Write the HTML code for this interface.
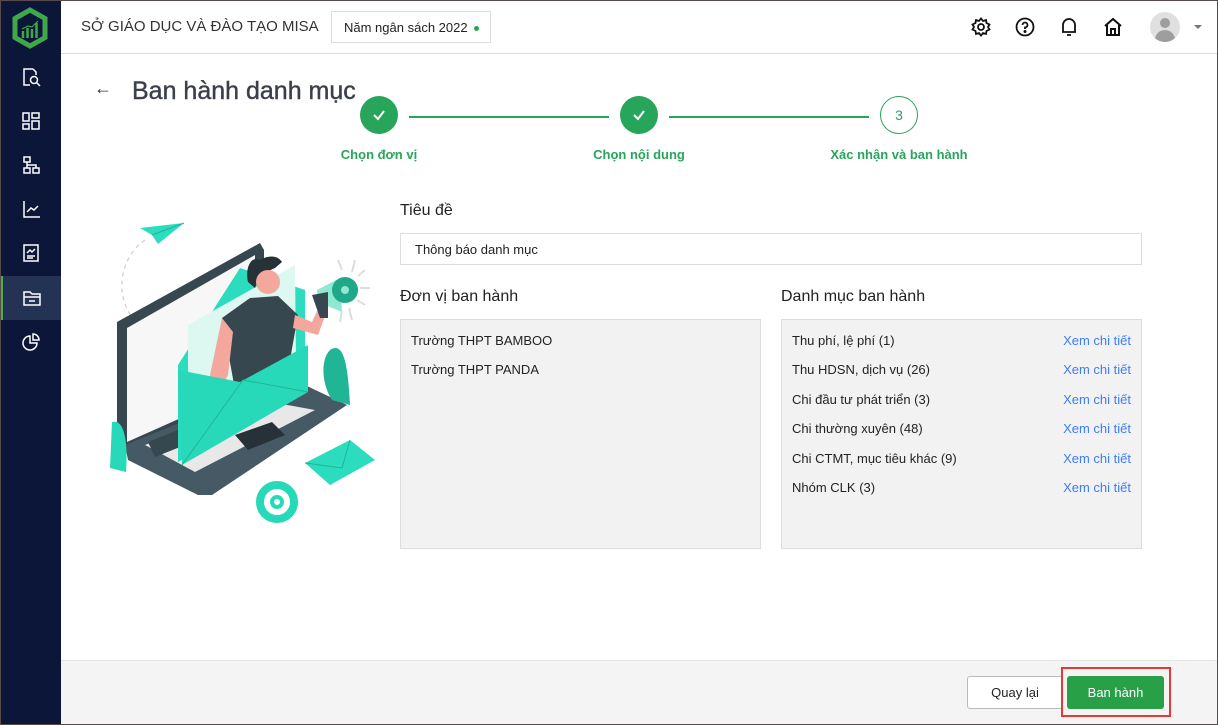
<!DOCTYPE html>
<html><head><meta charset="utf-8"><style>
*{box-sizing:border-box;margin:0;padding:0}
body{width:1218px;height:725px;overflow:hidden;font-family:"Liberation Sans",sans-serif;background:#fff;position:relative;color:#212121;font-size:13px}
.frame{position:absolute;inset:0;border:1px solid #5a4a4a;pointer-events:none;z-index:10}
.side{position:absolute;left:0;top:0;width:61px;height:725px;background:#0c1638}
.side .it{position:absolute;left:0;width:61px;height:44px;display:flex;align-items:center;justify-content:center}
.side .act{background:#243254;border-left:3px solid #4caf50}
.top{position:absolute;left:61px;top:0;right:0;height:54px;border-bottom:1px solid #ddd}
.t{position:absolute;white-space:nowrap}
.step{position:absolute;width:38px;height:38px;border-radius:50%;background:#27a55a;display:flex;align-items:center;justify-content:center}
.line{position:absolute;height:2px;background:#27a55a;top:116px}
.lbl{position:absolute;top:147px;font-size:13px;color:#27a55a;font-weight:bold;transform:translateX(-50%);white-space:nowrap}
.box{position:absolute;background:#f2f2f2;border:1px solid #ddd}
.row{position:absolute;left:10px;font-size:13px;color:#222}
.lnk{position:absolute;right:10px;color:#3d7ef7;font-size:13px}
.foot{position:absolute;left:61px;right:0;top:660px;bottom:0;background:#f4f4f4;border-top:1px solid #e4e4e4}
</style></head><body>
<div class="side">
  <svg style="position:absolute;left:11px;top:7px" width="38" height="42" viewBox="0 0 38 42"><path d="M19 3L34 11.5V30.5L19 39L4 30.5V11.5Z" fill="none" stroke="#3fa84a" stroke-width="5"/><path d="M12 31V24M16.5 31V21M21 31V22M25.5 31V16" stroke="#3fa84a" stroke-width="2.5"/><path d="M11 22L17 19L21 20L27 14" stroke="#3fa84a" stroke-width="1.2" fill="none"/></svg>
  <div class="it" style="top:55px"><svg width="20" height="20" fill="none" stroke="#fff" stroke-width="1.5"><path d="M12 2H3V18H9M12 2L15 5V8"/><circle cx="13" cy="13" r="3.5"/><path d="M15.5 15.5L19 19"/></svg></div>
  <div class="it" style="top:99px"><svg width="20" height="20" fill="none" stroke="#fff" stroke-width="1.5"><rect x="2" y="2" width="6" height="8"/><rect x="11" y="2" width="7" height="5"/><rect x="2" y="13" width="6" height="5"/><rect x="11" y="10" width="7" height="8"/></svg></div>
  <div class="it" style="top:143px"><svg width="20" height="20" fill="none" stroke="#fff" stroke-width="1.5"><rect x="3" y="2" width="6" height="5"/><rect x="3" y="13" width="6" height="5"/><rect x="12" y="13" width="6" height="5"/><path d="M6 7V13M6 10H15V13"/></svg></div>
  <div class="it" style="top:187px"><svg width="20" height="20" fill="none" stroke="#fff" stroke-width="1.5"><path d="M3 2V18H19M6 13L10 9L13 11L17 7"/></svg></div>
  <div class="it" style="top:231px"><svg width="20" height="20" fill="none" stroke="#fff" stroke-width="1.5"><rect x="3" y="2" width="14" height="16"/><path d="M6 10L9 7L11 9L14 6M6 13H14M6 15H12"/></svg></div>
  <div class="it act" style="top:276px"><svg width="20" height="20" fill="none" stroke="#fff" stroke-width="1.5"><path d="M2 4H8L10 6H18V17H2ZM2 9H18M7 13H13"/></svg></div>
  <div class="it" style="top:320px"><svg width="20" height="20" fill="none" stroke="#fff" stroke-width="1.5"><path d="M9 4A7 7 0 1 0 16 11H9Z"/><path d="M12 2A6 6 0 0 1 18 8H12Z"/></svg></div>
</div>
<div class="top">
  <div class="t" style="left:20px;top:18px;font-size:15px;color:#333">SỞ GIÁO DỤC VÀ ĐÀO TẠO MISA</div>
  <div style="position:absolute;left:270px;top:11px;width:160px;height:32px;border:1px solid #ddd;font-size:13px;padding:8px 0 0 12px;color:#222;white-space:nowrap">Năm ngân sách 2022 <span style="display:inline-block;width:5px;height:5px;border-radius:50%;background:#27a55a;vertical-align:middle;margin-left:3px"></span></div>
  <svg style="position:absolute;left:910px;top:17px" width="20" height="20" fill="none" stroke="#111" stroke-width="1.8"><circle cx="10" cy="10" r="3"/><path d="M10 1.5L12 4L15 3L15.5 6L18.5 7.5L17 10L18.5 12.5L15.5 14L15 17L12 16L10 18.5L8 16L5 17L4.5 14L1.5 12.5L3 10L1.5 7.5L4.5 6L5 3L8 4Z"/></svg>
  <svg style="position:absolute;left:954px;top:17px" width="20" height="20" fill="none" stroke="#111" stroke-width="1.8"><circle cx="10" cy="10" r="8.5"/><path d="M7.5 8A2.5 2.5 0 1 1 10 10.5V12"/><circle cx="10" cy="14.5" r=".6" fill="#111"/></svg>
  <svg style="position:absolute;left:998px;top:17px" width="20" height="20" fill="none" stroke="#111" stroke-width="1.8"><path d="M4 15V8A6 6 0 0 1 16 8V15H3H17M8 18H12"/></svg>
  <svg style="position:absolute;left:1042px;top:17px" width="20" height="20" fill="none" stroke="#111" stroke-width="2"><path d="M2 9L10 2L18 9M4 8V18H16V8M8 18V12H12V18"/></svg>
  <div style="position:absolute;left:1089px;top:12px;width:30px;height:30px;border-radius:50%;background:#e0e0e0;overflow:hidden"><div style="position:absolute;left:10px;top:6px;width:10px;height:10px;border-radius:50%;background:#9e9e9e"></div><div style="position:absolute;left:5px;top:18px;width:20px;height:14px;border-radius:10px 10px 0 0;background:#9e9e9e"></div></div>
  <div style="position:absolute;left:1133px;top:25px;border:4px solid transparent;border-top:4px solid #777"></div>
</div>
<div class="t" style="left:94px;top:78px;font-size:18px;color:#333">←</div>
<div class="t" style="left:132px;top:77px;font-size:25px;color:#3a3f4a;-webkit-text-stroke:0.4px #3a3f4a">Ban hành danh mục</div>
<div class="step" style="left:360px;top:96px"><svg width="14" height="14" fill="none" stroke="#fff" stroke-width="2"><path d="M2 7L6 11L12 3"/></svg></div>
<div class="line" style="left:409px;width:200px"></div>
<div class="step" style="left:620px;top:96px"><svg width="14" height="14" fill="none" stroke="#fff" stroke-width="2"><path d="M2 7L6 11L12 3"/></svg></div>
<div class="line" style="left:669px;width:200px"></div>
<div class="step" style="left:880px;top:96px;background:#fff;border:1.5px solid #27a55a;color:#27a55a;font-size:14px">3</div>
<div class="lbl" style="left:379px">Chọn đơn vị</div>
<div class="lbl" style="left:639px">Chọn nội dung</div>
<div class="lbl" style="left:899px">Xác nhận và ban hành</div>

<svg style="position:absolute;left:100px;top:210px" width="290" height="320" viewBox="0 0 290 320">
<path d="M45 30C15 50 10 105 55 125" fill="none" stroke="#ccc" stroke-width="1.2" stroke-dasharray="4 4"/>
<path d="M40 18L84 13L58 34L52 25Z" fill="#2bdcbf"/><path d="M52 25L84 13" stroke="#1fb596"/>
<path d="M17 112L160 33L164 40L164 178L27 240L17 236Z" fill="#37474f"/>
<path d="M27 118L155 45L155 175L27 232Z" fill="#f7f7f7"/>
<path d="M25 235L190 168L247 195L112 285L98 285L28 250Z" fill="#455a64"/>
<path d="M45 235L160 190L215 200L95 262Z" fill="#e8e8e8"/>
<path d="M48 232L78 220L85 235L55 247Z" fill="#37474f"/>
<path d="M135 225L172 212L185 225L148 240Z" fill="#263238"/>
<path d="M78 155L140 58L205 80L205 180L78 252Z" fill="#2bdcbf"/>
<path d="M88 115L195 55L196 150L88 205Z" fill="#dcf8f0"/>
<path d="M160 50C150 45 145 60 148 72L155 78L160 65L175 58L182 52C178 45 168 45 160 50Z" fill="#263238"/>
<circle cx="168" cy="72" r="12" fill="#f4a79d"/>
<path d="M122 108L150 88L178 86L198 105L190 150L180 175L135 180Z" fill="#37474f"/>
<path d="M122 108L110 165L120 180L128 165L133 122Z" fill="#f4a79d"/>
<path d="M195 105L212 112L220 95L228 98L218 125L193 118Z" fill="#f4a79d"/>
<path d="M217 80L240 68L242 102L218 92Z" fill="#8fe8d2"/>
<path d="M212 85L228 82L228 108L220 108Z" fill="#37474f"/>
<circle cx="245" cy="80" r="13" fill="#1fa88a"/><circle cx="245" cy="80" r="4" fill="#8fe8d2"/>
<g stroke="#ddd" stroke-width="2"><path d="M238 50L242 60M255 50L252 62M265 60L258 66M270 78L260 78M265 95L257 90M252 110L249 98M240 112L242 100"/></g>
<path d="M78 160L140 172L208 135L208 182L82 255Z" fill="#27d9b8"/>
<path d="M82 255L143 170M143 170L208 182" stroke="#1fb596" stroke-width="1"/>
<path d="M230 140C245 130 248 160 250 195L232 190C222 175 220 150 230 140Z" fill="#20b594"/>
<path d="M12 212C25 208 28 235 26 262L10 258Z" fill="#27d9b8"/>
<path d="M205 253L250 230L275 250L230 275Z" fill="#2bdcbf"/><path d="M205 253L242 258L250 230" stroke="#1fb596" fill="none"/>
<circle cx="177" cy="292" r="17" fill="none" stroke="#27d9b8" stroke-width="8"/>
<circle cx="177" cy="292" r="5" fill="none" stroke="#27d9b8" stroke-width="4"/>
</svg>

<div class="t" style="left:400px;top:202px;font-size:16px;color:#222">Tiêu đề</div>
<div style="position:absolute;left:400px;top:233px;width:742px;height:32px;border:1px solid #ddd;padding:8px 14px;font-size:13px">Thông báo danh mục</div>
<div class="t" style="left:400px;top:288px;font-size:16px;color:#222">Đơn vị ban hành</div>
<div class="t" style="left:781px;top:288px;font-size:16px;color:#222">Danh mục ban hành</div>
<div class="box" style="left:400px;top:319px;width:361px;height:230px">
  <div class="row" style="top:13px">Trường THPT BAMBOO</div>
  <div class="row" style="top:42px">Trường THPT PANDA</div>
</div>
<div class="box" style="left:781px;top:319px;width:361px;height:230px">
  <div class="row" style="top:13px">Thu phí, lệ phí (1)</div><div class="lnk" style="top:13px">Xem chi tiết</div>
  <div class="row" style="top:42px">Thu HDSN, dịch vụ (26)</div><div class="lnk" style="top:42px">Xem chi tiết</div>
  <div class="row" style="top:72px">Chi đầu tư phát triển (3)</div><div class="lnk" style="top:72px">Xem chi tiết</div>
  <div class="row" style="top:101px">Chi thường xuyên (48)</div><div class="lnk" style="top:101px">Xem chi tiết</div>
  <div class="row" style="top:131px">Chi CTMT, mục tiêu khác (9)</div><div class="lnk" style="top:131px">Xem chi tiết</div>
  <div class="row" style="top:160px">Nhóm CLK (3)</div><div class="lnk" style="top:160px">Xem chi tiết</div>
</div>
<div class="foot"></div>
<div style="position:absolute;left:967px;top:676px;width:96px;height:33px;border:1px solid #bbb;border-radius:3px;background:#fff;text-align:center;line-height:31px;font-size:13px">Quay lại</div>
<div style="position:absolute;left:1061px;top:667px;width:110px;height:50px;border:2px solid #e53935"></div>
<div style="position:absolute;left:1067px;top:676px;width:97px;height:33px;border-radius:3px;background:#27a048;color:#fff;text-align:center;line-height:33px;font-size:13px">Ban hành</div>
<div class="frame"></div>
</body></html>
